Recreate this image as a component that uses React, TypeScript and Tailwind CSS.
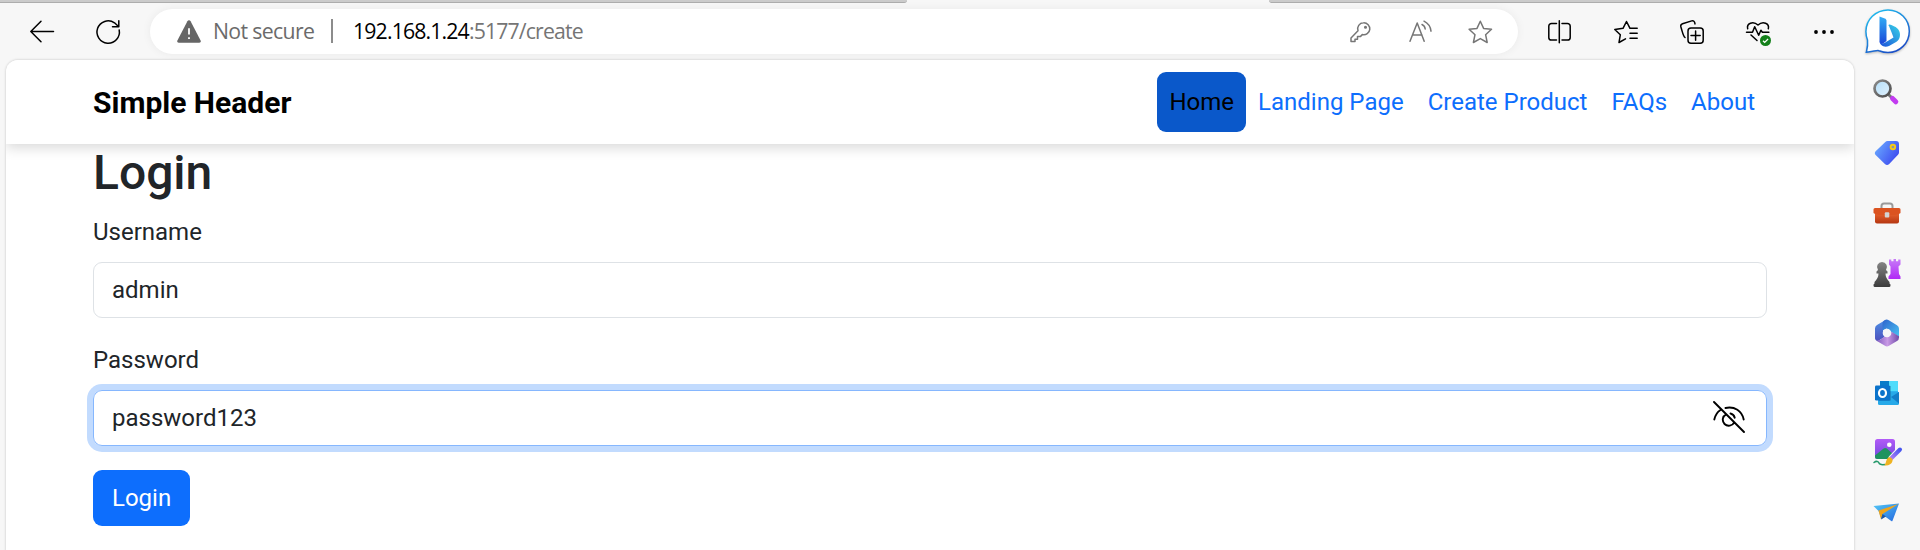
import type { ReactNode } from "react";

type IconProps = { children: ReactNode; className?: string };

function LineIcon({ children, className = "text-black" }: IconProps) {
  return (
    <svg
      viewBox="0 0 24 24"
      fill="none"
      stroke="currentColor"
      strokeWidth="1.5"
      strokeLinecap="round"
      strokeLinejoin="round"
      className={`size-6 shrink-0 overflow-visible ${className}`}
    >
      {children}
    </svg>
  );
}

function AppIcon({ children }: { children: ReactNode }) {
  return (
    <svg viewBox="0 0 30 30" className="size-[30px] shrink-0 overflow-visible">
      {children}
    </svg>
  );
}

function BingIcon() {
  return (
    <svg viewBox="0 0 46 46" className="ml-[29px] size-[46px] shrink-0 overflow-visible drop-shadow-[0_1px_1px_rgba(0,0,0,0.25)]">
      <defs>
        <linearGradient id="bingRing" x1="0" y1="0" x2="0.6" y2="1">
          <stop offset="0" stopColor="#1fc8f3" />
          <stop offset="1" stopColor="#1b50c8" />
        </linearGradient>
        <linearGradient id="bingStem" x1="0" y1="0" x2="0" y2="1">
          <stop offset="0" stopColor="#33aef5" />
          <stop offset="1" stopColor="#1b48d8" />
        </linearGradient>
        <linearGradient id="bingBowl" x1="0" y1="1" x2="1" y2="0">
          <stop offset="0" stopColor="#1c4fd9" />
          <stop offset="1" stopColor="#38d5e8" />
        </linearGradient>
      </defs>
      <path
        d="M23 .9C35.200 .9 44.300 10.700 44.300 22.200c0 12.100-9.700 21.300-21.300 21.300-3.500 0-6.300-.8-9-1.800-2-.8-5.500.9-12.700 1.500C2.200 39.500 3.100 36.500 2.500 31 1.500 28.300.9 25.500.9 22.500.9 10.500 10.700.9 23 .9Z"
        fill="#fff"
        stroke="url(#bingRing)"
        strokeWidth="1.5"
      />
      <path d="M24 17c-1-.6-.3-2 .8-1.500 6 2 10.200 4.500 10.200 10.200 0 3.300-1.300 5.600-3.500 7l-7.500 4.200c-4.500 2.300-9.500-.6-9.500-4.800 1.500 3.500 4.500 2 6.500.8l7.500-4.500-2.200-5.700Z" fill="url(#bingBowl)" />
      <path d="m14.500 7.500 5.300 1.900c1 .4 1.700 1.200 1.700 2.300V32l-3.100 2.300c-1.900.9-3.900-.3-3.900-2.300Z" fill="url(#bingStem)" />
    </svg>
  );
}

function SearchApp() {
  return (
    <AppIcon>
      <defs>
        <linearGradient id="lens" x1="0" y1="0" x2="1" y2="1">
          <stop offset="0" stopColor="#b4dffa" />
          <stop offset="1" stopColor="#e2f1fc" />
        </linearGradient>
        <linearGradient id="rim" x1="0" y1="0" x2="1" y2="1">
          <stop offset="0" stopColor="#8b8b8b" />
          <stop offset="1" stopColor="#4c4c4c" />
        </linearGradient>
      </defs>
      <path d="m16.500 16.500 4 4" stroke="#777" strokeWidth="3" />
      <path d="m20.500 20.500 3.300 3.300" stroke="#c23bf0" strokeWidth="5" strokeLinecap="round" />
      <circle cx="10.500" cy="10.500" r="8" fill="url(#lens)" stroke="url(#rim)" strokeWidth="2.700" />
    </AppIcon>
  );
}

function ShoppingApp() {
  return (
    <AppIcon>
      <defs>
        <linearGradient id="tag" x1="0" y1="0.200" x2="1" y2="0.800">
          <stop offset="0" stopColor="#69a9ff" />
          <stop offset="1" stopColor="#3a43ee" />
        </linearGradient>
      </defs>
      <path d="M15.500 3H24a3 3 0 0 1 3 3v8.500c0 1-.4 1.700-1 2.300l-8.800 9.200a3 3 0 0 1-4.300 0l-9-8.800a3 3 0 0 1 0-4.300L13.300 4c.6-.6 1.300-1 2.200-1Z" fill="url(#tag)" />
      <circle cx="20.900" cy="9" r="2.300" fill="#8a93b0" stroke="#f6c915" strokeWidth="1.900" />
    </AppIcon>
  );
}

function ToolsApp() {
  return (
    <AppIcon>
      <defs>
        <linearGradient id="box" x1="0" y1="0" x2="0" y2="1">
          <stop offset="0" stopColor="#e8622c" />
          <stop offset="1" stopColor="#b53712" />
        </linearGradient>
      </defs>
      <path d="M9.500 10.500V8A2.500 2.500 0 0 1 12 5.500h6A2.500 2.500 0 0 1 20.500 8v2.500" fill="none" stroke="#9a9a9a" strokeWidth="2" />
      <path d="M3 15h24v8.500a2 2 0 0 1-2 2H5a2 2 0 0 1-2-2Z" fill="url(#box)" />
      <path d="M3 10h24a1.500 1.500 0 0 1 1.500 1.500V15c-2 1.500-4.500 2-7 2h-13c-2.500 0-5-.5-7-2v-3.500A1.500 1.500 0 0 1 3 10Z" fill="#db5320" />
      <rect x="12.800" y="14.200" width="4.500" height="5.300" rx="1" fill="#d3d3d3" />
    </AppIcon>
  );
}

function GamesApp() {
  return (
    <AppIcon>
      <defs>
        <linearGradient id="rook" x1="0" y1="0" x2="0" y2="1">
          <stop offset="0" stopColor="#c77cf8" />
          <stop offset="1" stopColor="#b028f5" />
        </linearGradient>
        <linearGradient id="pawn" x1="0" y1="0" x2="0" y2="1">
          <stop offset="0" stopColor="#858585" />
          <stop offset="1" stopColor="#3c3c3c" />
        </linearGradient>
      </defs>
      <path d="M17 1.500h2.300v1.800h2.200V1h2.500v2.300h2.200V1.500H28.500v5L26.500 8.500 27 16l1.500 2.500V21H16.500v-2.500L18.500 16V8.500L17 6.500Z" fill="url(#rook)" />
      <path d="M10 4a5 5 0 0 1 4 8l1.500 1.500v2h-2c0 3.500 1.500 5.500 4 8.500v1.500l1 1v1a1.500 1.500 0 0 1-1.500 1.500H3A1.500 1.500 0 0 1 1.500 27.500v-1l1-1V24c2.500-3 4-5 4-8.500h-2v-2L6 12a5 5 0 0 1 4-8Z" fill="url(#pawn)" />
    </AppIcon>
  );
}

function OfficeApp() {
  return (
    <AppIcon>
      <defs>
        <linearGradient id="officeA" x1="0" y1="0" x2="0" y2="1">
          <stop offset="0" stopColor="#4d90e5" />
          <stop offset="1" stopColor="#4d50bd" />
        </linearGradient>
        <linearGradient id="officeB" x1="0" y1="0" x2="1" y2="1">
          <stop offset="0" stopColor="#2e64cd" />
          <stop offset="1" stopColor="#49c4f3" />
        </linearGradient>
        <linearGradient id="officeC" x1="0" y1="0" x2="1" y2="0">
          <stop offset="0" stopColor="#7d58bd" />
          <stop offset="0.500" stopColor="#c99ae5" />
          <stop offset="1" stopColor="#6f4aa8" />
        </linearGradient>
      </defs>
      <path d="M13 2.200 5 7a4 4 0 0 0-2 3.500v9A3 3 0 0 0 6 23l6.500-4-1.500-4V7Z" fill="url(#officeA)" />
      <path d="M12.500 2.300a4 4 0 0 1 4.300 0L25 7.300a4 4 0 0 1 2 3.500v8l-8-5-4.500-3.300L10.500 12.500V6.500c0-2 .6-3.200 2-4.200Z" fill="url(#officeB)" />
      <path d="M27 15.500v4a4 4 0 0 1-2 3.500l-8 4.800a4 4 0 0 1-4 0L4 22.500c5 .5 6.500-3 8.500-4h4l3-4.800 7.500 4.600Z" fill="url(#officeC)" />
      <circle cx="15" cy="15" r="4.300" fill="#f7f7f7" />
    </AppIcon>
  );
}

function OutlookApp() {
  return (
    <AppIcon>
      <rect x="8" y="3" width="18" height="17" rx="1.300" fill="#2eb4ef" />
      <path d="M17 3h7.700A1.300 1.300 0 0 1 26 4.300V13h-9Z" fill="#4fdcfb" />
      <path d="M8 3h9v5H8Z" fill="#087bc9" />
      <path d="M6 14h21v11.500a1.500 1.500 0 0 1-1.500 1.500h-18A1.500 1.500 0 0 1 6 25.500Z" fill="#27a9e8" />
      <path d="m27 14-8 5 8 6.500Z" fill="#137dc7" />
      <path d="M7 8h11.500v14.500H7Z" fill="#125082" opacity=".7" />
      <rect x="3" y="7.500" width="15" height="15" rx="1.300" fill="#0b73cb" />
      <ellipse cx="10.500" cy="15" rx="3.500" ry="4" fill="none" stroke="#fff" strokeWidth="2.200" />
    </AppIcon>
  );
}

function DesignerApp() {
  return (
    <AppIcon>
      <defs>
        <linearGradient id="photo" x1="0" y1="0" x2="0" y2="1">
          <stop offset="0" stopColor="#b35bf8" />
          <stop offset="1" stopColor="#6e48dc" />
        </linearGradient>
        <linearGradient id="brush" x1="1" y1="0" x2="0" y2="1">
          <stop offset="0" stopColor="#4655f0" />
          <stop offset="1" stopColor="#a77cf5" />
        </linearGradient>
      </defs>
      <rect x="3" y="1" width="20" height="20" rx="2.500" fill="url(#photo)" />
      <circle cx="17.300" cy="6.700" r="2.300" fill="#fff" />
      <path d="m3 17.500 8.300-6.800a3 3 0 0 1 3.800 0L22 17l-3 4H5.500A2.500 2.500 0 0 1 3 18.500Z" fill="#1e9360" />
      <path d="M2 24.500c2.500-2 4.500-1 5 .5s2 2 6 1.500" fill="none" stroke="#25996b" strokeWidth="1.500" strokeLinecap="round" />
      <path d="m19.500 20 8.500-9" stroke="#f7f7f7" strokeWidth="6" strokeLinecap="round" />
      <path d="m19.500 20 8.500-8.500" stroke="url(#brush)" strokeWidth="4" strokeLinecap="round" />
      <path d="M16.500 19.500c2-1 4.700 1.200 4 3.500-.8 3.500-4.500 5-8.500 4.300 2.500-1.300 1.500-6 4.500-7.800Z" fill="#efb321" />
    </AppIcon>
  );
}

function DropApp() {
  return (
    <AppIcon>
      <defs>
        <linearGradient id="plane" x1="0" y1="0" x2="1" y2="1">
          <stop offset="0" stopColor="#54c8f5" />
          <stop offset="1" stopColor="#2468df" />
        </linearGradient>
      </defs>
      <path d="M1.500 8 27 5.500l-6.500 17.300a.8.800 0 0 1-1.200.3L13 18.500 9.500 21 6.500 13Z" fill="url(#plane)" />
      <path d="M26.500 6 6.500 12.500l2.500 9 1.500-5.500Z" fill="#f0a51b" />
      <path d="m9 21.500 1.500-5.500 3.500 2.500Z" fill="#1c56a5" />
    </AppIcon>
  );
}

function BrowserToolbar() {
  return (
    <header className="flex h-[57px] shrink-0 items-start bg-[#f7f7f7] pt-[6px]">
      <div className="flex h-[45px] items-center pl-[30px]">
        <LineIcon>
          <path d="M11 1.200.8 11.500 11 21.800M.8 11.500h22.700" />
        </LineIcon>
        <div className="ml-[42px] flex">
          <LineIcon>
            <path d="M23.200 10A11.200 11.200 0 1 1 18.500 2.800L22.500 6.500M22.800.8V6.800H16.500" />
          </LineIcon>
        </div>
      </div>
      <div className="ml-[30px] flex h-[45px] w-[1368px] items-center rounded-full bg-white pr-[26px] pl-[27px] shadow-[0_0_10px_rgba(0,0,0,0.06)]">
        <svg viewBox="0 0 24 24" className="size-6 shrink-0">
          <path d="M10.400 1.200a1.900 1.900 0 0 1 3.200 0l10 19.200c.6 1.200 0 2.300-1.300 2.300H1.700C.4 22.700-.2 21.600.4 20.400Z" fill="#666" />
          <path d="M12 8.200v6.300M12 17.200v1.800" stroke="#fff" strokeWidth="1.800" />
        </svg>
        <span className="ml-3 w-[118px] pb-0.5 font-['Open_Sans',sans-serif] text-[21.25px] tracking-[-0.65px] whitespace-nowrap text-[#6b6b6b]">
          Not secure
        </span>
        <span className="mb-px h-6 w-0.5 bg-[#8c8c8c]" />
        <span className="ml-5 flex-1 pb-0.5 font-['Open_Sans',sans-serif] text-[21.25px] tracking-[-0.85px] whitespace-nowrap text-[#757575]">
          <span className="text-black">192.168.1.24</span>:5177/create
        </span>
        <div className="flex gap-9">
          <LineIcon className="text-[#767676]">
            <path d="M15.500 2.800a6 6 0 1 1-1.200 11.800l-2 2H9.500v2.600H7v2.300H3V18l7-7.200a6 6 0 0 1 5.500-8Z" />
            <circle cx="17.500" cy="7.300" r=".8" fill="currentColor" />
          </LineIcon>
          <LineIcon className="text-[#767676]">
            <path d="M2 21.200 9.200 3l7 18.200M4.500 15h9.500M14 4.500c2 1 3 2.500 3.200 4.500M16 1.200c4 2 6.500 5.300 7 10" />
          </LineIcon>
          <LineIcon className="text-[#767676]">
            <path d="m12.300 1.200 3.300 7.200 7.900.9-5.900 5.400 1.600 7.800-6.900-3.900-6.900 3.900 1.600-7.800-5.900-5.400 7.900-.9Z" />
          </LineIcon>
        </div>
      </div>
      <div className="ml-[30px] flex h-[45px] items-center gap-[42px]">
        <LineIcon>
          <path d="M8.500 3.500h-5A2.700 2.700 0 0 0 .8 6.200v11.200a2.700 2.700 0 0 0 2.700 2.700h5M14 3.500h5.500a2.700 2.700 0 0 1 2.700 2.700v11.200a2.700 2.700 0 0 1-2.700 2.700H14M11.300.8v22" />
        </LineIcon>
        <LineIcon>
          <path d="M16 8.300 12.500 1.500 9 8.300.8 9.500l5.500 5.300L5 22.500l6.500-3.700M16 8.300h7.200M16 13.300h7.200M16 18.300h7.200" />
        </LineIcon>
        <LineIcon>
          <rect x="8" y="8" width="15.200" height="15.200" rx="3" />
          <path d="M15.600 11v9.200M11 15.600h9.200M5 17.500C3 16 2.800 13 .9 7c-.4-1.500.2-2.700 1.600-3.200L11.700.9c1.700-.5 3 .5 3.300 3" />
        </LineIcon>
        <div className="relative flex">
          <LineIcon>
            <path d="M1.700 8.800C.3 3.500 7 .4 12 5c5-4.600 11.700-1.500 10.300 3.800M.5 12.300h6l2.200-5.500 4 8.500 2.200-5 1.500 2h6.500M5 15l6 5.500" />
          </LineIcon>
          <svg viewBox="0 0 12 12" className="absolute top-[15px] left-[14px] size-[11px] overflow-visible">
            <circle cx="6" cy="6" r="6" fill="#13801a" />
            <path d="m3.300 6.200 1.800 1.800L8.800 4.300" fill="none" stroke="#fff" strokeWidth="1.400" />
          </svg>
        </div>
        <LineIcon>
          <g fill="currentColor" stroke="none">
            <circle cx="4" cy="12" r="1.900" />
            <circle cx="12" cy="12" r="1.900" />
            <circle cx="20" cy="12" r="1.900" />
          </g>
        </LineIcon>
      </div>
      <BingIcon />
    </header>
  );
}

const links = ["Landing Page", "Create Product", "FAQs", "About"];

export default function App() {
  return (
    <div className="flex h-[550px] w-[1920px] flex-col overflow-hidden bg-[#f7f7f7] font-[Roboto,sans-serif] text-2xl leading-9 text-[#212529]">
      <div className="flex h-[3px] shrink-0 justify-between">
        <div className="w-[907px] rounded-br-sm border-b border-[#adadad] bg-[#cbcbcb]" />
        <div className="w-[651px] rounded-bl-sm border-b border-[#adadad] bg-[#cbcbcb]" />
      </div>
      <BrowserToolbar />
      <div className="flex min-h-0 flex-1">
        <main className="ml-[6px] w-[1848px] overflow-hidden rounded-t-[12px] bg-white shadow-[0_0_2px_1px_rgba(0,0,0,0.10)]">
          <nav className="flex h-[84px] items-center justify-between bg-white px-[87px] shadow-[0_4px_12px_rgba(0,0,0,0.15)]">
            <span className="pt-px text-[30px] leading-9 font-bold text-black">Simple Header</span>
            <div className="flex">
              <a className="rounded-[9px] bg-[#0a58ca] p-3 text-black">Home</a>
              {links.map((label) => (
                <a key={label} className="p-3 text-[#0d6efd]">
                  {label}
                </a>
              ))}
            </div>
          </nav>
          <form className="flex flex-col items-start px-[87px]">
            <h1 className="mb-3 text-5xl leading-[57.6px] font-medium">Login</h1>
            <label className="mb-3">Username</label>
            <div className="mb-6 h-14 w-full rounded-[9px] border border-[#dee2e6] px-[18px] py-[9px]">admin</div>
            <label className="mb-3">Password</label>
            <div className="mb-6 flex h-14 w-full items-center justify-between rounded-[9px] border border-[#86b7fe] px-[18px] shadow-[0_0_0_6px_#c2dbfe]">
              <span>password123</span>
              <svg viewBox="0 0 32 32" fill="none" stroke="#000" strokeWidth="1.900" strokeLinecap="round" className="mr-[3px] mb-px size-8">
                <path d="m1 1 30 30M1.300 18.500C2.300 14 4.300 11 7.500 9M12.500 7C21.500 5 29 10 30.700 18.500M13.200 13.300a6 6 0 1 0 8 8M17.500 12.500c2.200.5 3.700 2 4.200 4.200" />
              </svg>
            </div>
            <button type="button" className="h-14 rounded-[9px] bg-[#0d6efd] px-[19px] text-white">
              Login
            </button>
          </form>
        </main>
        <aside className="flex w-[66px] flex-col items-center gap-[30px] pt-[18px]">
          <SearchApp />
          <ShoppingApp />
          <ToolsApp />
          <GamesApp />
          <OfficeApp />
          <OutlookApp />
          <DesignerApp />
          <DropApp />
        </aside>
      </div>
    </div>
  );
}
